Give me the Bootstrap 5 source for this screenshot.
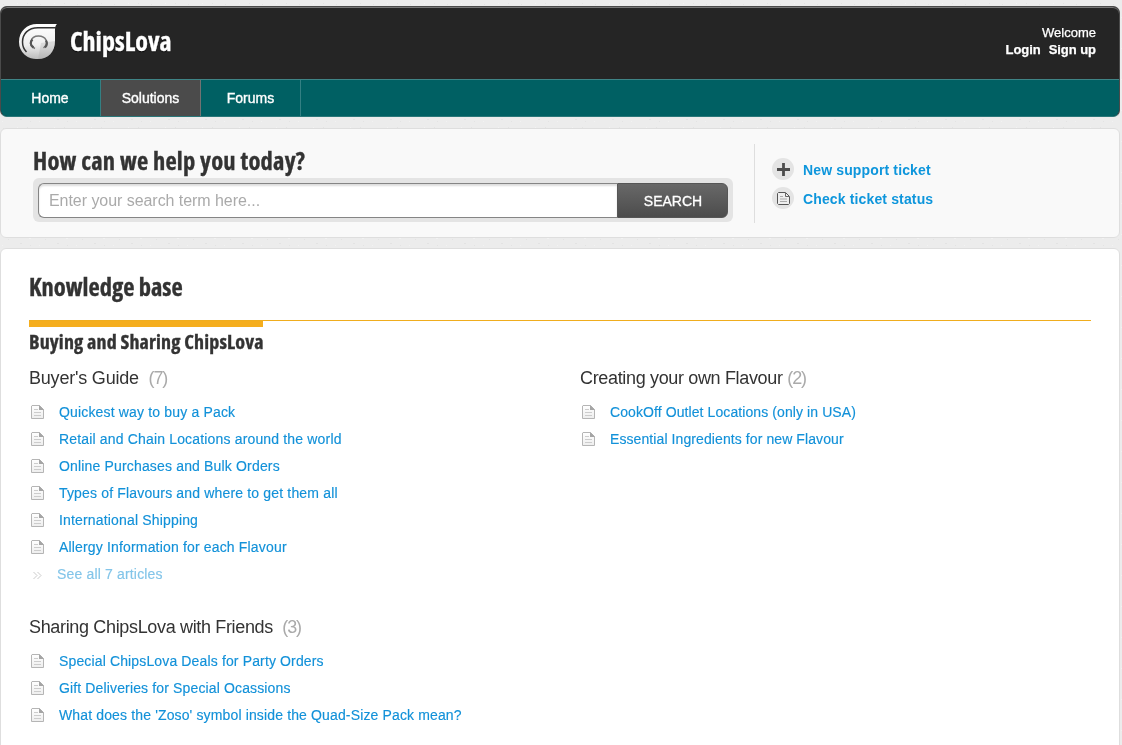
<!DOCTYPE html>
<html lang="en">
<head>
<meta charset="utf-8">
<meta name="viewport" content="width=device-width, initial-scale=1">
<title>ChipsLova - Solutions</title>
<link href="https://cdn.jsdelivr.net/npm/bootstrap@5.3.0/dist/css/bootstrap.min.css" rel="stylesheet">
<style>
html,body{height:745px;overflow:hidden}
body{background:#ececec;font-family:"Liberation Sans",Arial,sans-serif;font-size:14px;line-height:17px;color:#333}
a{text-decoration:none;color:#1291d9}
h1,h2,h3,.brand-name{font-family:"Open Sans",sans-serif;font-stretch:75%;font-weight:700;color:#333;margin:0;white-space:nowrap;-webkit-text-stroke:.35px currentColor}
.page{width:1120px;height:745px;padding-top:6px}
.site-head{height:111px;border-radius:7px;overflow:hidden;background:#252525;border:1px solid #4a4a4a;border-bottom-color:#2a7779;box-shadow:inset 0 1px #777}
.masthead{height:72px;padding:0 23px 0 16px;color:#fff}
.logo{margin-top:15px}
.brand-name{margin:17px 0 0 11px;font-size:26px;line-height:34px;letter-spacing:0;color:#fff;text-shadow:0 1px 1px #000}
.account{line-height:17px;font-size:13px;margin-top:17px;-webkit-text-stroke:.25px #fff}
.account a{color:#fff;font-weight:700;letter-spacing:-.05px}
.site-nav{height:37px;background:#006063;border-top:1px solid #3f8486;margin:0 -1px -1px}
.site-nav .nav-link{width:100px;padding:10px 0 0;text-align:center;color:#fff;border-right:1px solid #338083;height:37px;-webkit-text-stroke:.35px #fff}
.site-nav .nav-link:first-child{width:101px}
.site-nav .nav-link.active{background:#4b4b4b;border-color:#727272}
.panel{border:1px solid #dedede;border-radius:6px}
.help{height:110px;margin-top:11px;background:#f9f9f9;padding:15px 32px}
.help h1{font-size:24.5px;line-height:34px;letter-spacing:.22px}
.search-box{width:700px;height:44px;background:#e4e4e4;border-radius:6px;padding:5px}
.search-box .form-control{font-size:16px;height:35px;padding:0 10px;border:1px solid #858585;border-radius:6px 0 0 6px;box-shadow:inset 0 2px 2px #ddd;border-right:0;letter-spacing:-.05px}
.search-box .form-control::placeholder{color:#aaa;opacity:1}
.search-box .btn{width:111px;height:35px;padding:1px 0 0 1px;border:1px solid #565656;border-radius:0 6px 6px 0;color:#fff;background:linear-gradient(#686868,#4c4c4c);font-size:14px;-webkit-text-stroke:.3px #fff}
.ticket-links{border-left:1px solid #dedede;height:79px;margin-left:21px;padding:14px 0 0 17px}
.ticket-links a{height:29px;font-weight:700;gap:9px;color:#0e96dc;letter-spacing:.14px}
.base{height:520px;margin-top:10px;background:#fff;padding:21px 28px}
.base h2{font-size:24.5px;line-height:34px;letter-spacing:0}
.category{border-top:1px solid #f0ad1e;margin-top:16px}
.category h3{font-size:20px;line-height:30px;letter-spacing:.14px;border-top:6px solid #f5ae1e;width:234px}
.folder{width:551px;flex:none}
.folder h4{font-size:18px;line-height:24px;height:24px;margin:9px 0;font-weight:400;color:#333;letter-spacing:-.34px;white-space:nowrap}
.folder h4.loose{letter-spacing:-.2px}
.folder h4 span{color:#aaa;letter-spacing:-1.1px}
.folder a{height:27px;gap:14px;padding-left:2px;letter-spacing:.165px;-webkit-text-stroke:.15px currentColor}
.folder.tight a{letter-spacing:.09px}
.folder a.more{color:#83c5e9;gap:12px}
.second{margin-top:27px}
.second h4{margin-top:0}
.second a{letter-spacing:.14px}
</style>
</head>
<body>
<svg width="0" height="0" class="position-absolute"><defs>
<linearGradient id="paper" x2="0" y2="1"><stop stop-color="#fff"/><stop offset="1" stop-color="#eee"/></linearGradient>
<linearGradient id="silver" x2="0" y2="1"><stop stop-color="#fff"/><stop offset=".6" stop-color="#eee"/><stop offset="1" stop-color="#bbb"/></linearGradient>
<pattern id="grain" width="37" height="31" patternUnits="userSpaceOnUse"><path d="M3 4.500h1M13 9.500h2M27 3.500h1M34 17.500h1M8 22.500h1M20 26.500h2M19 16.500h1M30 28.500h1" stroke="#e3e3e3"/><path d="M7 8.500h2M17 3.500h1M25 12.500h2M11 17.500h1M29 21.500h2M2 28.500h1" stroke="#f2f2f2"/></pattern>
<symbol id="doc" viewBox="0 0 14 15"><path d="M1 .5h7.500l4 4v9H.5V1z" fill="url(#paper)" stroke="#b5b5b5"/><path d="M8 0v5h5z" fill="#a5a5a5"/><path d="M3 4.500h4M3 7.500h7M3 10.500h7" stroke="#ccc"/></symbol>
</defs></svg>
<svg class="position-fixed top-0 start-0 w-100 h-100 z-n1"><rect width="100%" height="100%" fill="url(#grain)"/></svg>
<div class="page">
<header class="site-head">
<div class="masthead d-flex">
<svg class="logo" width="42" height="40" viewBox="0 0 42 40"><path d="M40 2C38 4 38 6 38 11v8c0 11-7 18-17 18A17 17 0 0 1 2 20C2 9 10 2 20 2z" fill="url(#silver)"/><path d="M24 21l14-2c0 11-7 18-17 18z" fill="#aaa" opacity=".3"/><path d="M39 5.700H21C11 5.700 5.500 12 5.500 20c0 4 1 7 4 10" fill="none" stroke="#333" stroke-width="1.500"/><path d="M18 26.500c-7-3-5-12.500 3.500-12.500 7.500 0 11 7 5 12" fill="none" stroke="#777" stroke-width="1.500"/><path d="M16.500 25.500c-4-3-3-6-1-8M29 18.500c1.500 2.500 1 5-1 7" fill="none" stroke="#555" stroke-width="2.200"/></svg>
<div class="brand-name">ChipsLova</div>
<div class="account ms-auto text-end">Welcome<br><a href="#">Login</a><a href="#" class="ms-2">Sign up</a></div>
</div>
<nav class="site-nav nav flex-nowrap"><a class="nav-link" href="#">Home</a><a class="nav-link active" href="#">Solutions</a><a class="nav-link" href="#">Forums</a></nav>
</header>
<section class="panel help d-flex">
<div><h1>How can we help you today?</h1>
<form class="search-box d-flex"><input class="form-control" placeholder="Enter your search term here..."><button type="button" class="btn flex-shrink-0">SEARCH</button></form></div>
<div class="ticket-links">
<a href="#" class="d-flex"><svg width="22" height="22"><circle cx="11" cy="11" r="11" fill="#e4e4e4"/><path d="M11.500 5v13M5 11.500h13" stroke="#4c4c4c" stroke-width="2.800"/></svg><span class="pt-1">New support ticket</span></a>
<a href="#" class="d-flex"><svg width="22" height="22"><circle cx="11" cy="11" r="11" fill="#e4e4e4"/><path d="M5.500 6.500l1-1h7l4 4v7l-1 1h-10l-1-1z" fill="#eee" stroke="#555"/><path d="M13.500 6v3.500h3.500" fill="none" stroke="#666"/><path d="M8 9.500h3M8 12h7M8 14.500h7" fill="none" stroke="#aaa"/></svg><span class="pt-1">Check ticket status</span></a>
</div>
</section>
<main class="panel base">
<h2>Knowledge base</h2>
<section class="category"><h3>Buying and Sharing ChipsLova</h3>
<div class="d-flex">
<div class="folder"><h4 class="loose">Buyer's Guide&nbsp; <span>(7)</span></h4>
<a class="d-flex align-items-center" href="#"><svg width="14" height="15"><use href="#doc"/></svg><span>Quickest way to buy a Pack</span></a>
<a class="d-flex align-items-center" href="#"><svg width="14" height="15"><use href="#doc"/></svg><span>Retail and Chain Locations around the world</span></a>
<a class="d-flex align-items-center" href="#"><svg width="14" height="15"><use href="#doc"/></svg><span>Online Purchases and Bulk Orders</span></a>
<a class="d-flex align-items-center" href="#"><svg width="14" height="15"><use href="#doc"/></svg><span>Types of Flavours and where to get them all</span></a>
<a class="d-flex align-items-center" href="#"><svg width="14" height="15"><use href="#doc"/></svg><span>International Shipping</span></a>
<a class="d-flex align-items-center" href="#"><svg width="14" height="15"><use href="#doc"/></svg><span>Allergy Information for each Flavour</span></a>
<a class="more d-flex align-items-center" href="#"><svg width="14" height="15"><path d="M2.500 5l3.500 3.500L2.500 12M6.500 5l3.500 3.500L6.500 12" fill="none" stroke="#ccc"/></svg><span>See all 7 articles</span></a>
</div>
<div class="folder tight"><h4>Creating your own Flavour <span>(2)</span></h4>
<a class="d-flex align-items-center" href="#"><svg width="14" height="15"><use href="#doc"/></svg><span>CookOff Outlet Locations (only in USA)</span></a>
<a class="d-flex align-items-center" href="#"><svg width="14" height="15"><use href="#doc"/></svg><span>Essential Ingredients for new Flavour</span></a>
</div>
</div>
<div class="folder second"><h4>Sharing ChipsLova with Friends&nbsp; <span>(3)</span></h4>
<a class="d-flex align-items-center" href="#"><svg width="14" height="15"><use href="#doc"/></svg><span>Special ChipsLova Deals for Party Orders</span></a>
<a class="d-flex align-items-center" href="#"><svg width="14" height="15"><use href="#doc"/></svg><span>Gift Deliveries for Special Ocassions</span></a>
<a class="d-flex align-items-center" href="#"><svg width="14" height="15"><use href="#doc"/></svg><span>What does the 'Zoso' symbol inside the Quad-Size Pack mean?</span></a>
</div>
</section>
</main>
</div>
<script src="https://cdn.jsdelivr.net/npm/bootstrap@5.3.0/dist/js/bootstrap.bundle.min.js"></script>
</body>
</html>
